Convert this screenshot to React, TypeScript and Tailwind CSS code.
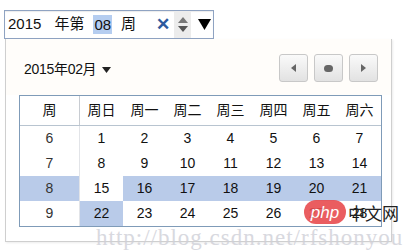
import React from "react";

const font = { fontFamily: '"Liberation Sans", Arial, "Noto Sans CJK SC", sans-serif' };

const heads = ["周日", "周一", "周二", "周三", "周四", "周五", "周六"];
const rows: { w: number; d: number[] }[] = [
  { w: 6, d: [1, 2, 3, 4, 5, 6, 7] },
  { w: 7, d: [8, 9, 10, 11, 12, 13, 14] },
  { w: 8, d: [15, 16, 17, 18, 19, 20, 21] },
  { w: 9, d: [22, 23, 24, 25, 26, 27, 28] },
];

function isHi(r: number, c: number) {
  if (r === 2) return c >= 1;
  if (r === 3) return c === 0;
  return false;
}

export default function App() {
  return (
    <div className="relative w-[403px] h-[250px] bg-white overflow-hidden text-[#111]" style={font}>
      {/* input */}
      <div className="ml-[4px] mt-[10px] w-[210px] h-[29px] border border-[#8fa3c2] flex items-center text-[15px] shadow-[inset_0_1px_1px_rgba(0,0,0,0.08)]">
        <span className="ml-[3px]">2015</span>
        <span className="ml-[13px]">年第</span>
        <span className="ml-[9px] bg-[#b5cdf0] px-[1px] leading-[19px]">08</span>
        <span className="ml-[9px]">周</span>
        <span className="ml-[20px] text-[#2d5a9e] font-bold text-[17px] leading-none">✕</span>
        <span className="ml-[4px] w-[17px] h-[27px] bg-[#ececec] flex flex-col items-center justify-center gap-[3px]">
          <svg width="10" height="6" viewBox="0 0 10 6"><path d="M5 0 L10 6 L0 6 Z" fill="#777" /></svg>
          <svg width="10" height="6" viewBox="0 0 10 6"><path d="M0 0 L10 0 L5 6 Z" fill="#555" /></svg>
        </span>
        <span className="ml-[7px]">
          <svg width="13" height="11" viewBox="0 0 13 11"><path d="M0 0 L13 0 L6.5 11 Z" fill="#000" /></svg>
        </span>
      </div>
      {/* popup */}
      <div className="ml-[5px] w-[387px] h-[203px] border border-t-0 border-[#cfcfcf] shadow-[1px_1px_2px_rgba(0,0,0,0.08)]">
        <div className="h-[56px] flex items-start bg-[#fffdfa]">
          <div className="ml-[18px] mt-[20px] flex items-center text-[14px] tracking-[-0.3px]">
            2015年02月
            <svg className="ml-[6px]" width="9" height="6" viewBox="0 0 9 6"><path d="M0 0 L9 0 L4.5 6 Z" fill="#222" /></svg>
          </div>
          <div className="ml-auto mr-[13px] mt-[15px] flex gap-[6px]">
            {[0, 1, 2].map((i) => (
              <div
                key={i}
                className="w-[29px] h-[28px] rounded-[3px] border border-[#c8c8c8] bg-gradient-to-b from-[#fafafa] to-[#e2e2e2] flex items-center justify-center"
              >
                {i === 0 && <svg width="5" height="8" viewBox="0 0 5 8"><path d="M5 0 L5 8 L0 4 Z" fill="#666" /></svg>}
                {i === 1 && <div className="w-[9px] h-[7px] rounded-full bg-[#666]" />}
                {i === 2 && <svg width="5" height="8" viewBox="0 0 5 8"><path d="M0 0 L5 4 L0 8 Z" fill="#666" /></svg>}
              </div>
            ))}
          </div>
        </div>
        <div className="ml-[13px] w-[363px] border border-[#7f9bb8] text-[14px]">
          <div className="grid grid-cols-[60px_repeat(7,43px)] h-[30px] border-b border-[#b8c4d0]">
            <div className="flex items-center justify-center border-r border-[#c8ccd2]">周</div>
            {heads.map((h) => (
              <div key={h} className="flex items-center justify-center">{h}</div>
            ))}
          </div>
          {rows.map((r, ri) => (
            <div key={ri} className="grid grid-cols-[60px_repeat(7,43px)] h-[25px]">
              <div className={`flex items-center justify-center border-r border-[#e2e4e8] text-[#333] ${ri === 2 ? "bg-[#b9cbe9]" : ""}`}>{r.w}</div>
              {r.d.map((d, ci) => (
                <div key={d} className={`flex items-center justify-center ${isHi(ri, ci) ? "bg-[#b9cbe9]" : ""}`}>{d}</div>
              ))}
            </div>
          ))}
        </div>
      </div>
      {/* watermark */}
      <div
        className="absolute left-[96px] top-[221px] text-[23px] text-[#cfd0d8] tracking-[1px] whitespace-nowrap opacity-80"
        style={{ fontFamily: '"Liberation Serif", serif' }}
      >
        http://blog.csdn.net/rfshonyou
      </div>
      <div className="absolute left-[304px] top-[200px] flex items-center">
        <div className="w-[42px] h-[24px] rounded-full bg-[#e84c4f] opacity-90 flex items-center justify-center text-white text-[17px] italic leading-none" style={{ fontFamily: '"Liberation Sans", sans-serif' }}>
          php
        </div>
        <div className="ml-[2px] text-[17px] text-[#222] leading-none" style={{ fontFamily: '"Noto Sans CJK SC", sans-serif' }}>中文网</div>
      </div>
    </div>
  );
}
